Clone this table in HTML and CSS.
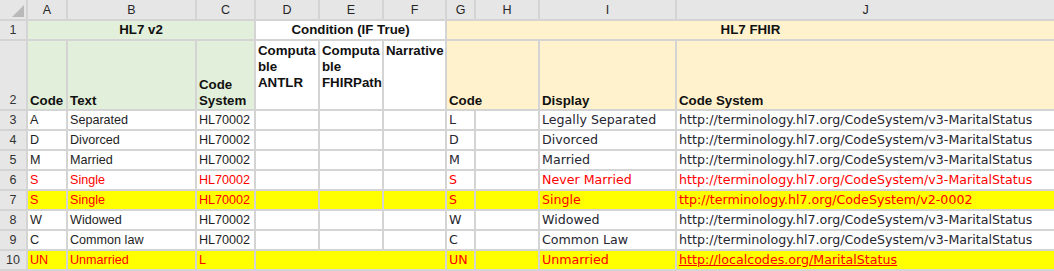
FILE: index.html
```html
<!DOCTYPE html>
<html>
<head>
<meta charset="utf-8">
<link rel="stylesheet" href="styles.css">
</head>
<body>
<div class="sheet">
  <div class="corner"><span class="tri"></span></div>
  <div class="ch">A</div><div class="ch">B</div><div class="ch">C</div><div class="ch">D</div><div class="ch">E</div><div class="ch">F</div><div class="ch">G</div><div class="ch">H</div><div class="ch">I</div><div class="ch">J</div>

  <div class="rh">1</div>
  <div class="c hd green span3 center">HL7 v2</div>
  <div class="c hd white span3 center">Condition (IF True)</div>
  <div class="c hd beige span4 center">HL7 FHIR</div>

  <div class="rh">2</div>
  <div class="c hd green bottom">Code</div>
  <div class="c hd green bottom">Text</div>
  <div class="c hd green bottom">Code<br>System</div>
  <div class="c hd white top">Computa<br>ble<br>ANTLR</div>
  <div class="c hd white top">Computa<br>ble<br>FHIRPath</div>
  <div class="c hd white top">Narrative</div>
  <div class="c hd beige bottom span2">Code</div>
  <div class="c hd beige bottom">Display</div>
  <div class="c hd beige bottom">Code System</div>

  <div class="rh">3</div>
  <div class="c v2">A</div><div class="c v2">Separated</div><div class="c v2">HL70002</div>
  <div class="c"></div><div class="c"></div><div class="c"></div>
  <div class="c fh">L</div><div class="c"></div><div class="c fh">Legally Separated</div><div class="c fh">http://terminology.hl7.org/CodeSystem/v3-MaritalStatus</div>

  <div class="rh">4</div>
  <div class="c v2">D</div><div class="c v2">Divorced</div><div class="c v2">HL70002</div>
  <div class="c"></div><div class="c"></div><div class="c"></div>
  <div class="c fh">D</div><div class="c"></div><div class="c fh">Divorced</div><div class="c fh">http://terminology.hl7.org/CodeSystem/v3-MaritalStatus</div>

  <div class="rh">5</div>
  <div class="c v2">M</div><div class="c v2">Married</div><div class="c v2">HL70002</div>
  <div class="c"></div><div class="c"></div><div class="c"></div>
  <div class="c fh">M</div><div class="c"></div><div class="c fh">Married</div><div class="c fh">http://terminology.hl7.org/CodeSystem/v3-MaritalStatus</div>

  <div class="rh">6</div>
  <div class="c v2 red">S</div><div class="c v2 red">Single</div><div class="c v2 red">HL70002</div>
  <div class="c"></div><div class="c"></div><div class="c"></div>
  <div class="c fh red">S</div><div class="c"></div><div class="c fh red">Never Married</div><div class="c fh red">http://terminology.hl7.org/CodeSystem/v3-MaritalStatus</div>

  <div class="rh">7</div>
  <div class="c v2 red yel">S</div><div class="c v2 red yel">Single</div><div class="c v2 red yel">HL70002</div>
  <div class="c yel"></div><div class="c yel"></div><div class="c yel"></div>
  <div class="c fh red yel">S</div><div class="c yel"></div><div class="c fh red yel">Single</div><div class="c fh red yel">ttp://terminology.hl7.org/CodeSystem/v2-0002</div>

  <div class="rh">8</div>
  <div class="c v2">W</div><div class="c v2">Widowed</div><div class="c v2">HL70002</div>
  <div class="c"></div><div class="c"></div><div class="c"></div>
  <div class="c fh">W</div><div class="c"></div><div class="c fh">Widowed</div><div class="c fh">http://terminology.hl7.org/CodeSystem/v3-MaritalStatus</div>

  <div class="rh">9</div>
  <div class="c v2">C</div><div class="c v2">Common law</div><div class="c v2">HL70002</div>
  <div class="c"></div><div class="c"></div><div class="c"></div>
  <div class="c fh">C</div><div class="c"></div><div class="c fh">Common Law</div><div class="c fh">http://terminology.hl7.org/CodeSystem/v3-MaritalStatus</div>

  <div class="rh">10</div>
  <div class="c v2 red yel">UN</div><div class="c v2 red yel">Unmarried</div><div class="c v2 red yel">L</div>
  <div class="c yel span3"></div>
  <div class="c fh red yel">UN</div><div class="c yel"></div><div class="c fh red yel">Unmarried</div><div class="c fh red yel"><span class="link">http://localcodes.org/MaritalStatus</span></div>
</div>
</body>
</html>
```

FILE: styles.css
```css
html, body {
  margin: 0;
  padding: 0;
  background: #ffffff;
}

.sheet {
  width: 1054px;
  height: 271px;
  display: grid;
  grid-template-columns: 26px 38px 127px 57px 62px 62px 61px 27px 62px 135px 1fr;
  grid-template-rows: 19px 18px 68px repeat(8, 18px);
  gap: 2px;
  background: #d4d4d4;
  overflow: hidden;
}

.corner {
  background: #e6e6e6;
  position: relative;
}

.tri {
  position: absolute;
  right: 2px;
  bottom: 2px;
  width: 0;
  height: 0;
  border-left: 12px solid transparent;
  border-bottom: 12px solid #b9b9b9;
}

.ch {
  background: #e6e6e6;
  font-family: "Liberation Sans", Arial, sans-serif;
  font-size: 12.5px;
  color: #262626;
  text-align: center;
  line-height: 20px;
}

.rh {
  background: #e6e6e6;
  font-family: "Liberation Sans", Arial, sans-serif;
  font-size: 12.5px;
  color: #333333;
  display: flex;
  align-items: flex-end;
  justify-content: center;
  line-height: 18px;
}

.c {
  background: #ffffff;
  padding-left: 2px;
  white-space: nowrap;
  overflow: visible;
  line-height: 18px;
  color: #1e1e1e;
}

.hd {
  font-family: "Liberation Sans", Arial, sans-serif;
  font-weight: bold;
  font-size: 13.3px;
  color: #111111;
  line-height: 16px;
}

.center {
  text-align: center;
  padding-left: 0;
  line-height: 18px;
}

.bottom {
  display: flex;
  flex-direction: column;
  justify-content: flex-end;
  padding-bottom: 0;
}

.top {
  padding-top: 2px;
}

.green { background: #e2efda; }
.beige { background: #fff2cc; }
.white { background: #ffffff; }
.yel { background: #ffff00; }

.span2 { grid-column: span 2; }
.span3 { grid-column: span 3; }
.span4 { grid-column: span 4; }

.v2 {
  font-family: "Liberation Sans", Arial, sans-serif;
  font-size: 12.6px;
}

.fh {
  font-family: "DejaVu Sans", Verdana, sans-serif;
  font-size: 12.65px;
  color: #262630;
}

.red { color: #ff0000; }

.link {
  text-decoration: underline;
}
```
